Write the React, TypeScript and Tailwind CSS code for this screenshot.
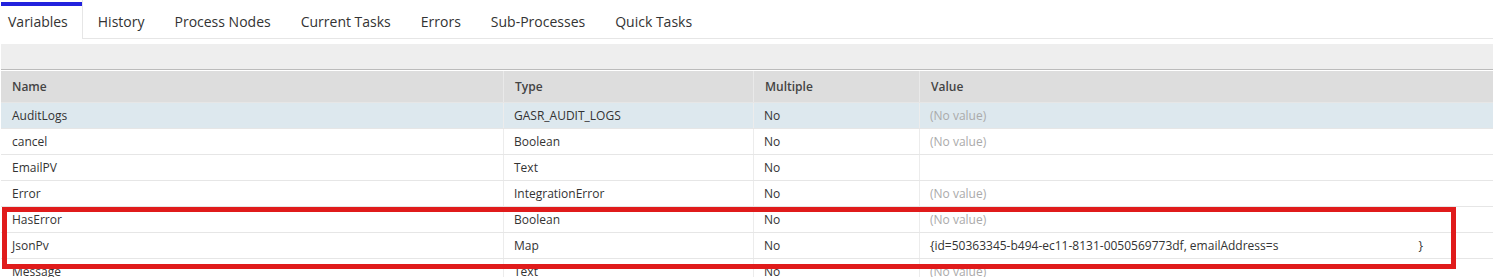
import React from 'react';

const tabs = ['Variables', 'History', 'Process Nodes', 'Current Tasks', 'Errors', 'Sub-Processes', 'Quick Tasks'];

type Row = { name: string; type: string; multiple: string; value: React.ReactNode; empty?: boolean };

const rows: Row[] = [
  { name: 'AuditLogs', type: 'GASR_AUDIT_LOGS', multiple: 'No', value: '(No value)', empty: true },
  { name: 'cancel', type: 'Boolean', multiple: 'No', value: '(No value)', empty: true },
  { name: 'EmailPV', type: 'Text', multiple: 'No', value: '' },
  { name: 'Error', type: 'IntegrationError', multiple: 'No', value: '(No value)', empty: true },
  { name: 'HasError', type: 'Boolean', multiple: 'No', value: '(No value)', empty: true },
  {
    name: 'JsonPv',
    type: 'Map',
    multiple: 'No',
    value: (
      <span className="flex items-center">
        {'{id=50363345-b494-ec11-8131-0050569773df, emailAddress=s'}
        <span className="inline-block w-[140px]" />
        {'}'}
      </span>
    ),
  },
  { name: 'Message', type: 'Text', multiple: 'No', value: '(No value)', empty: true },
];

const cols = 'grid grid-cols-[502px_250px_166px_1fr]';

export default function App() {
  return (
    <div className="relative h-[277px] w-[1493px] overflow-hidden bg-white font-['Open_Sans',sans-serif] text-[12px] text-[#333]">
      {/* tabs */}
      <div className="flex h-[39px] border-b border-[#e6e6e6]">
        {tabs.map((t, i) => (
          <div
            key={t}
            className={
              i === 0
                ? 'relative -mb-px flex items-center border-r border-[#e6e6e6] bg-white pl-[8px] pr-[14px] pt-[4px] text-[14px] text-[#333]'
                : 'flex items-center px-[15px] pt-[4px] text-[14px] text-[#333]'
            }
          >
            {i === 0 && <div className="absolute left-px right-0 top-[2px] h-[4px] bg-[#2222dd]" />}
            {t}
          </div>
        ))}
      </div>

      {/* toolbar strip */}
      <div className="mt-[5px] ml-px h-[25px] bg-[#eeeeee]" />

      {/* table */}
      <div className="ml-px border-t border-[#bbbbbb]">
        <div className={`${cols} h-[32px] border-t border-white bg-[#dddddd] font-semibold text-[#444]`}>
          {['Name', 'Type', 'Multiple', 'Value'].map((h, i) => (
            <div key={h} className={`flex items-center pl-[11px] ${i > 0 ? 'border-l border-[#e9e9e9]' : ''}`}>
              {h}
            </div>
          ))}
        </div>
        {rows.map((r, idx) => (
          <div
            key={r.name}
            className={`${cols} h-[26px] border-t border-[#e6e6e6] ${idx === 0 ? 'bg-[#dde8ee]' : 'bg-white'}`}
          >
            <div className="flex items-center pl-[11px]">{r.name}</div>
            <div className="flex items-center border-l border-[#ececec] pl-[10px]">{r.type}</div>
            <div className="flex items-center border-l border-[#ececec] pl-[10px]">{r.multiple}</div>
            <div className={`flex items-center border-l border-[#ececec] pl-[10px] ${r.empty ? 'text-[#aaaaaa]' : ''}`}>
              {r.value}
            </div>
          </div>
        ))}
      </div>

      {/* highlight box */}
      <div className="pointer-events-none absolute left-[2px] top-[207px] h-[62px] w-[1454px] border-[5px] border-[#e01b1b]" />
    </div>
  );
}
